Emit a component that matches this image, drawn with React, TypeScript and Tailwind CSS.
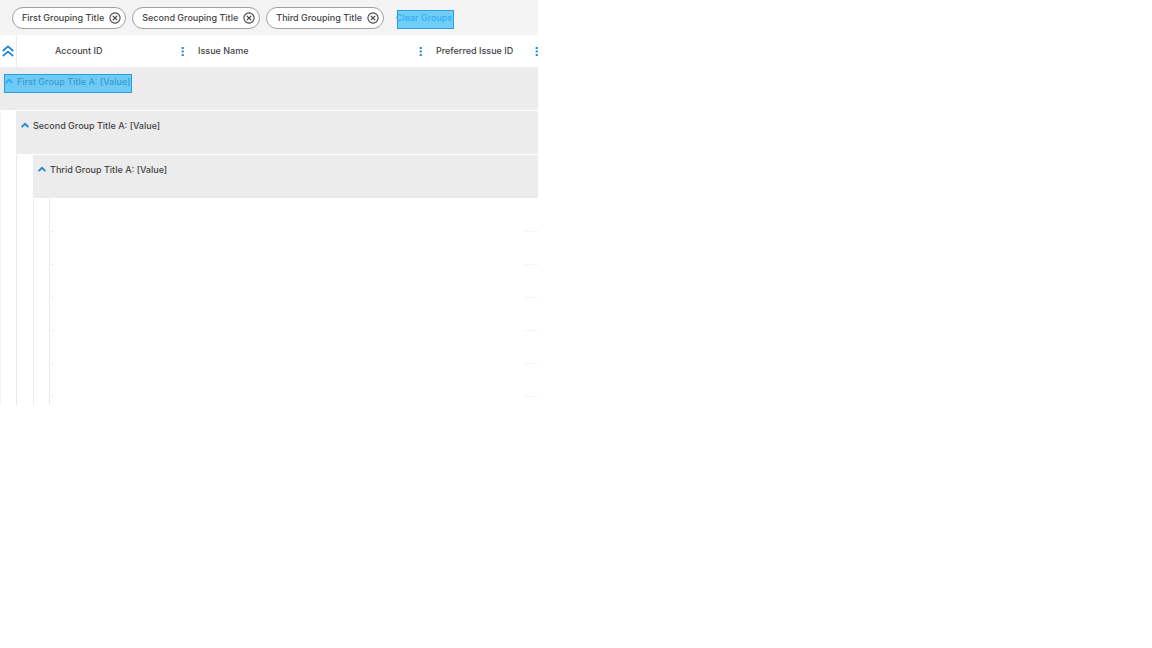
import React, { useState } from 'react';

const initialGroups = ['First Grouping Title', 'Second Grouping Title', 'Third Grouping Title'];

const ChevronUp = () => (
  <svg className="w-2 h-2 shrink-0" viewBox="0 0 8 8" fill="none" stroke="#1c84d2" strokeWidth="1.7">
    <path d="M0.6 5.2L4 1.8L7.4 5.2" />
  </svg>
);

const DoubleChevronUp = () => (
  <svg className="w-3 h-3 mx-auto" viewBox="0 0 12 12" fill="none" stroke="#1c84d2" strokeWidth="1.8">
    <path d="M0.8 6L6 1.4L11.2 6" />
    <path d="M0.8 11.2L6 6.6L11.2 11.2" />
  </svg>
);

const CloseIcon = () => (
  <svg className="w-3 h-3" viewBox="0 0 12 12" fill="none" stroke="#444444" strokeWidth="1.1">
    <circle cx="6" cy="6" r="5.1" />
    <path d="M3.8 3.8L8.2 8.2M8.2 3.8L3.8 8.2" strokeWidth="1.2" />
  </svg>
);

const MenuDots = () => (
  <svg className="w-[3px] h-[9px]" viewBox="0 0 3 9" fill="#1c84d2">
    <rect x="0.7" y="0" width="2" height="2" />
    <rect x="0.7" y="3.5" width="2" height="2" />
    <rect x="0.7" y="7" width="2" height="2" />
  </svg>
);

const Highlight = ({ className }: { className: string }) => (
  <span className={`absolute h-[19px] pointer-events-none border border-[#2c9edb] bg-[#36beff]/70 ${className}`} />
);

const ColumnTitle = ({ title }: { title: string }) => (
  <div className="flex items-center justify-between">
    <span>{title}</span>
    <button type="button" aria-label={`${title} menu`} className="shrink-0">
      <MenuDots />
    </button>
  </div>
);

const GroupTitle = ({ title, highlighted = false }: { title: string; highlighted?: boolean }) => (
  <button type="button" className="relative flex items-center gap-1 mt-[9px] ml-[5px] h-3 font-medium whitespace-nowrap">
    <ChevronUp />
    {title}
    {highlighted && <Highlight className="-left-px -right-0.5 -top-0.5" />}
  </button>
);

const App = () => {
  const [groups, setGroups] = useState<string[]>(initialGroups);

  return (
    <main className="min-h-screen bg-white text-[#444444] text-[9px] leading-3 font-medium font-[Inter,sans-serif]">
      <section className="w-full max-w-[538px] overflow-hidden">
        {/* Grouping chips */}
        <div className="flex items-center gap-1.5 bg-[#f4f4f4] pl-3 pt-[7px] pb-1.5">
          {groups.map((group) => (
            <div
              key={group}
              className="flex items-center gap-[5px] h-[22px] pl-[9px] pr-1 rounded-full border border-[#a0a0a0] bg-white whitespace-nowrap"
            >
              <span>{group}</span>
              <button
                type="button"
                aria-label={`Remove ${group}`}
                onClick={() => setGroups(groups.filter((g) => g !== group))}
              >
                <CloseIcon />
              </button>
            </div>
          ))}
          <button
            type="button"
            className="relative ml-1.5 font-normal text-[#0a70c4] whitespace-nowrap"
            onClick={() => setGroups([])}
          >
            Clear Groups
            <Highlight className="left-px -right-0.5 -top-0.5" />
          </button>
        </div>

        {/* Grouped table */}
        <table className="w-full table-fixed border-separate border-spacing-0">
          <colgroup>
            <col className="w-4" />
            <col className="w-[17px]" />
            <col className="w-4" />
            <col className="w-1.5" />
            <col className="w-[135px]" />
            <col />
            <col className="w-[97px]" />
            <col className="w-[13px]" />
          </colgroup>
          <thead>
            <tr className="h-8 text-left">
              <th className="p-0">
                <button type="button" aria-label="Collapse all" className="block w-full">
                  <DoubleChevronUp />
                </button>
              </th>
              <th colSpan={4} className="p-0 pl-[38px] pr-1.5 font-medium border-l border-[#ececec]">
                <ColumnTitle title="Account ID" />
              </th>
              <th className="p-0 pl-2 pr-1.5 font-medium">
                <ColumnTitle title="Issue Name" />
              </th>
              <th colSpan={2} className="p-0 pl-2 font-medium">
                <ColumnTitle title="Preferred Issue ID" />
              </th>
            </tr>
          </thead>
          <tbody>
            <tr className="h-11 align-top">
              <td colSpan={8} className="p-0 bg-[#ececec] border-b border-white">
                <GroupTitle title="First Group Title A: [Value]" highlighted />
              </td>
            </tr>
            <tr className="h-11 align-top">
              <td className="p-0 border-l border-[#f4f4f4]" />
              <td colSpan={7} className="p-0 bg-[#ececec] border-b border-white">
                <GroupTitle title="Second Group Title A: [Value]" />
              </td>
            </tr>
            <tr className="h-11 align-top">
              <td className="p-0 border-l border-[#f4f4f4]" />
              <td className="p-0 border-l border-[#e8e8e8]" />
              <td colSpan={6} className="p-0 bg-[#ececec] border-b border-white">
                <GroupTitle title="Thrid Group Title A: [Value]" />
              </td>
            </tr>
            {[1, 2, 3, 4, 5, 6].map((row) => (
              <tr key={row} className="h-[33px]">
                <td className="p-0 border-l border-[#f4f4f4]" />
                <td className="p-0 border-l border-[#e8e8e8]" />
                <td className="p-0 border-l border-[#ececec]" />
                <td className="p-0 border-l border-b border-l-[#e8e8e8] border-b-[#f4f4f4]" />
                <td colSpan={3} className="p-0" />
                <td className="p-0 border-b border-[#f4f4f4]" />
              </tr>
            ))}
            <tr className="h-2">
              <td className="p-0 border-l border-[#f4f4f4]" />
              <td className="p-0 border-l border-[#e8e8e8]" />
              <td className="p-0 border-l border-[#ececec]" />
              <td className="p-0 border-l border-[#e8e8e8]" />
              <td colSpan={4} className="p-0" />
            </tr>
          </tbody>
        </table>
      </section>
    </main>
  );
};

export default App;
